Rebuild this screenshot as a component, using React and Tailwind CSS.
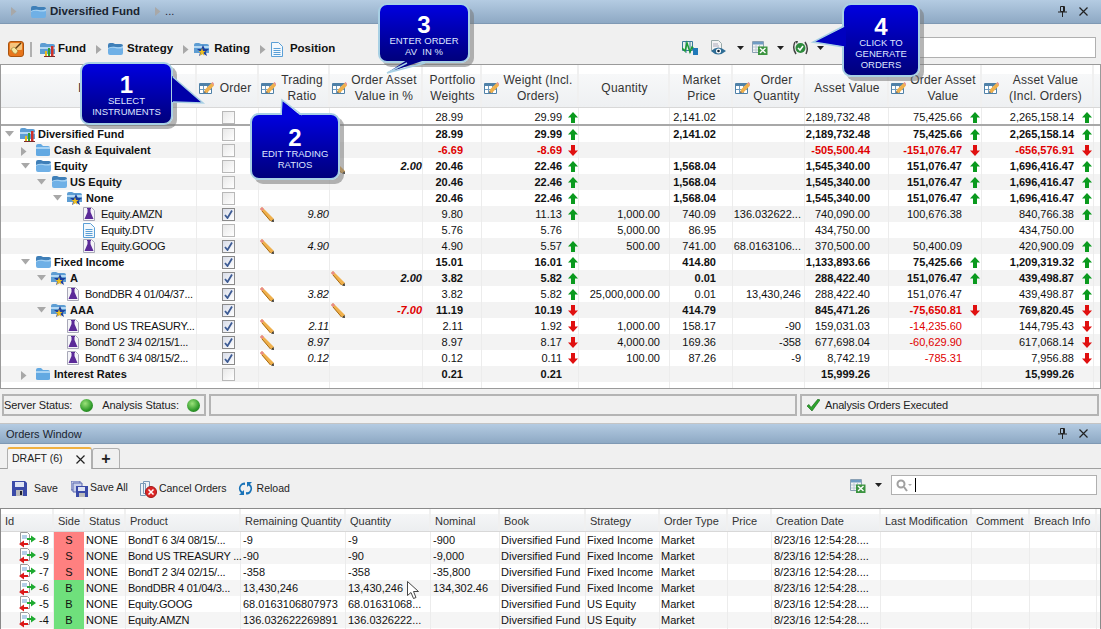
import React from 'react';

const FONT = "font-['Liberation_Sans',Arial,sans-serif]";
const mainCols = 'grid grid-cols-[196px_62px_71px_93px_59px_97px_91px_63px_72px_84px_93px_112px_1fr]';
const orderCols = 'grid grid-cols-[53px_31px_41px_115px_105px_85px_69px_86px_74px_68px_44px_109px_91px_58px_67px_1fr]';

function Tri({ dir = 'right', color = '#a8a8a8' }) {
  if (dir === 'down') return <svg width="9" height="6" viewBox="0 0 9 6" className="shrink-0"><path d="M0 0h9L4.5 5.5z" fill={color} /></svg>;
  return <svg width="6" height="9" viewBox="0 0 6 9" className="shrink-0"><path d="M0 0v9l5.5-4.5z" fill={color} /></svg>;
}

function Drop() {
  return <svg width="7" height="4" viewBox="0 0 7 4" className="shrink-0"><path d="M0 0h7L3.5 4z" fill="#222" /></svg>;
}

function FolderOpen({ w = 17 }) {
  return (
    <svg width={w} height="14" viewBox="0 0 17 14" className="shrink-0">
      <path d="M1 3q0-2 2-2h3l2 1h6q2 0 2 2v2H1z" fill="#3f7fb8" />
      <path d="M1 6q4-2 8-1t7-1v7q0 2-2 2H3q-2 0-2-2z" fill="#6fb0e6" />
      <path d="M1 6q4-2 8-1t7-1v2q-4 1-8 0t-7 1z" fill="#a9d3f3" />
    </svg>
  );
}

function FolderClosed() {
  return (
    <svg width="16" height="14" viewBox="0 0 16 14" className="shrink-0 mr-[1px]">
      <path d="M1 3q0-2 2-2h3l2 2h5q2 0 2 2v7q0 1-2 1H3q-2 0-2-1z" fill="#63a9e2" />
      <path d="M1 4h14v2H1z" fill="#a9d3f3" />
    </svg>
  );
}

function FundIcon() {
  return (
    <svg width="17" height="15" viewBox="0 0 17 15" className="shrink-0">
      <path d="M1 3q0-2 2-2h3l2 1h6q2 0 2 2v8H1z" fill="#5d9dd3" />
      <path d="M1 5h15v2H1z" fill="#b5d8f3" />
      <path d="M6 9h2v5H6z" fill="#e8b820" />
      <path d="M9 6h2v8H9z" fill="#2f9e35" />
      <path d="M12 4h2.500v10H12z" fill="#d03028" />
      <path d="M5 14h11v1H5z" fill="#7a2a2a" />
    </svg>
  );
}

function RatingIcon() {
  return (
    <svg width="16" height="15" viewBox="0 0 16 15" className="shrink-0 mr-[1px]">
      <path d="M0 3q0-2 2-2h3l2 1h6q2 0 2 2v7H0z" fill="#5d9dd3" />
      <path d="M0 4h15v2H0z" fill="#b5d8f3" />
      <path d="M9 3l1.800 4H15l-3.300 2.800L13 14l-4-2.500L5 14l1.300-4.200L3 7h4.200z" fill="#1d3f9c" />
      <path d="M8 6l1 3h2.500l-2 1.700.8 3L8 12l-2.200 1.700.8-3-2-1.700H7z" fill="#f0c020" />
    </svg>
  );
}

function DocIcon() {
  return (
    <svg width="12" height="15" viewBox="0 0 12 15" className="shrink-0">
      <path d="M.5.500h7l4 4v10H.5z" fill="#f2f8fd" stroke="#5a9fd6" />
      <path d="M2.500 6.500h7M2.500 8.500h7M2.500 10.500h7M2.500 12.500h7" stroke="#5a9fd6" />
    </svg>
  );
}

function FlaskIcon() {
  return (
    <svg width="12" height="14" viewBox="0 0 12 14" className="shrink-0">
      <path d="M.5.500h8l3 3v10H.5z" fill="#f4f4f8" stroke="#a8a8b8" />
      <path d="M4.500 2h3v3l3 7H1.500l3-7z" fill="#5b2a98" />
      <path d="M4 1.500h4" stroke="#5b2a98" />
    </svg>
  );
}

function Pencil() {
  return (
    <svg width="14" height="15" viewBox="0 0 14 15" className="shrink-0">
      <path d="M0 2l2-2 12 12-1 2.500L10.500 14z" fill="#efb04c" />
      <path d="M0 2l2-2 2 2-2 2z" fill="#e88a8a" />
      <path d="M2 4l8.500 10" stroke="#a86a10" />
      <path d="M11 14.500l3 .5-.5-3z" fill="#333" />
    </svg>
  );
}

function ColEdit() {
  return (
    <svg width="15" height="13" viewBox="0 0 15 13" className="shrink-0">
      <path d="M.5 1.500h12v10H.5z" fill="#fff" stroke="#4f81a8" />
      <path d="M1 2h11v2H1z" fill="#4f81a8" />
      <path d="M4.500 4v7M8.500 4v7M1 7.500h11" stroke="#6e9cc0" />
      <path d="M5 10.500l1-3L12.500 1 15 3.500 8 11z" fill="#efb04c" />
      <path d="M12.500 1l1-1L16 2.500l-1 1z" fill="#e88a8a" />
      <path d="M5 11l.6-2 1.400 1.500z" fill="#555" />
    </svg>
  );
}

function Arrow({ up }) {
  const d = up ? 'M5 0l5 5.500H7V11H3V5.500H0z' : 'M5 11L0 5.500h3V0h4v5.500h3z';
  return <svg width="10" height="11" viewBox="0 0 10 11"><path d={d} fill={up ? '#0a9a1e' : '#e01010'} /></svg>;
}

function Check({ on }) {
  return (
    <div className={`ml-[1px] w-[13px] h-[13px] border flex items-center justify-center ${on ? 'border-[#8a8a8a] bg-gradient-to-br from-[#d8dce8] to-white' : 'border-[#b8b8b8] bg-gradient-to-br from-[#e8e8e8] to-white'}`}>
      {on && <svg width="9" height="9" viewBox="0 0 9 9"><path d="M1 5l2.500 3L8 0.500" fill="none" stroke="#3d5b94" strokeWidth="1.800" /></svg>}
    </div>
  );
}

function OrderIcon() {
  return (
    <svg width="17" height="16" viewBox="0 0 17 16">
      <path d="M1.500.500h7l2 2v10h-9z" fill="#fff" stroke="#9a9a9a" />
      <path d="M3 4h5M3 6h5" stroke="#6aa0d0" />
      <path d="M8 6h4V3.500L17 7l-5 3.500V8H8z" fill="#1eaa30" />
      <path d="M9 11H5V8.500L0 12l5 3.500V13h4z" fill="#dd1818" />
    </svg>
  );
}

function ExcelIcon() {
  return (
    <svg width="16" height="15" viewBox="0 0 16 15" className="shrink-0">
      <path d="M.5 1.500h11v11H.5z" fill="#f4f4f4" stroke="#8aa0b4" />
      <path d="M1 2h10v2.500H1z" fill="#6f9cc4" />
      <path d="M4 4v8M7.500 4v8M1 7h10M1 10h10" stroke="#b8c8d4" />
      <path d="M6 6.500h9.500V15H6z" fill="#3c9440" />
      <path d="M8 8l5.500 5M13.500 8L8 13" stroke="#fff" strokeWidth="1.400" />
    </svg>
  );
}

function MiniChart() {
  return (
    <svg width="16" height="15" viewBox="0 0 16 15" className="shrink-0">
      <path d="M.5 1.500h10v9h-10z" fill="#e8f2e8" stroke="#3a7a9c" />
      <path d="M4 1v12M8 1v12" stroke="#3a7a9c" />
      <path d="M0 8l3 3 2-8 3 9 2-5 3 3" fill="none" stroke="#1b9a34" strokeWidth="1.500" />
      <path d="M11 8h5v7h-5z" fill="#2079b8" />
    </svg>
  );
}

function EyeDoc() {
  return (
    <svg width="16" height="15" viewBox="0 0 16 15" className="shrink-0">
      <path d="M1.500.500h7l3 3v7h-10z" fill="#f4f4f4" stroke="#9aa" />
      <path d="M3 4h5M3 6h6" stroke="#aab" />
      <path d="M1 11q7-7 15 0-8 7-15 0z" fill="#2f6d95" />
      <circle cx="8.500" cy="11" r="2.500" fill="#fff" />
      <circle cx="8.500" cy="11" r="1.300" fill="#123" />
    </svg>
  );
}

function GenIcon() {
  return (
    <svg width="17" height="16" viewBox="0 0 17 16" className="shrink-0">
      <path d="M3 2Q0 8 4 14" fill="none" stroke="#444" strokeWidth="1.500" />
      <path d="M14 14q3-6-1-12" fill="none" stroke="#444" strokeWidth="1.500" />
      <path d="M3 1l3 0-1 3z" fill="#444" />
      <circle cx="8.500" cy="8" r="5" fill="#2d8a3c" />
      <path d="M6 8l2 2 3-4" fill="none" stroke="#fff" strokeWidth="1.500" />
    </svg>
  );
}

function Broom() {
  return (
    <svg width="16" height="16" viewBox="0 0 16 16" className="shrink-0">
      <rect x=".5" y=".5" width="15" height="15" rx="2.500" fill="#e8761c" stroke="#a85410" />
      <rect x="2" y="2" width="12" height="7" rx="1" fill="#f6c47c" />
      <path d="M13 2L7 8" stroke="#5a3a10" strokeWidth="1.500" />
      <path d="M3 8l3-2 4 4-2 3q-3 0-5-5z" fill="#f4e6a0" stroke="#8a6a20" strokeWidth=".5" />
    </svg>
  );
}

function Pin() {
  return (
    <svg width="9" height="11" viewBox="0 0 9 11" className="shrink-0">
      <path d="M2.500.500h4v5h-4zM0 6h9M4.500 6v5" fill="none" stroke="#222" />
      <path d="M5 1h1.500v4.500H5z" fill="#222" />
    </svg>
  );
}

function CloseX({ size = 9 }) {
  return <svg width={size} height={size} viewBox="0 0 9 9" className="shrink-0"><path d="M.5.500l8 8M8.500.500l-8 8" stroke="#222" strokeWidth="1.200" /></svg>;
}

function Callout({ pos, num, lines, tail, edge, fill, pad }) {
  return (
    <div className={`absolute ${pos} ${pad} rounded-[9px] border-2 border-[#a8d0e4] bg-gradient-to-b from-[#0000e0] to-[#00007c] shadow-[4px_4px_0_rgba(120,120,120,0.55)] flex flex-col items-center`}>
      <svg className="absolute left-0 top-0 w-full h-full overflow-visible">
        <polygon points={tail} fill={fill} />
        <polyline points={edge} fill="none" stroke="#a8d0e4" strokeWidth="1.500" />
      </svg>
      <span className="relative font-bold text-white text-[24px] leading-[26px] mb-[-3px]">{num}</span>
      {lines.map(l => <span key={l} className="relative text-[9.500px] leading-[11px] text-[#dfe6ff] whitespace-pre">{l}</span>)}
    </div>
  );
}

const rows = [
  { level: 0, icon: 'fund', label: 'Diversified Fund', tri: 'down', bold: 1, pw: '28.99', wt: '29.99', wd: 'up', mp: '2,141.02', av: '2,189,732.48', oa: '75,425.66', od: 'up', inc: '2,265,158.14', id: 'up' },
  { level: 1, icon: 'closed', label: 'Cash & Equivalent', tri: 'right', bold: 1, red: 1, pw: '-6.69', wt: '-8.69', wd: 'down', av: '-505,500.44', oa: '-151,076.47', od: 'down', inc: '-656,576.91', id: 'down', incRed: 1 },
  { level: 1, icon: 'open', label: 'Equity', tri: 'down', bold: 1, oavPen: 1, oav: '2.00', pw: '20.46', wt: '22.46', wd: 'up', mp: '1,568.04', av: '1,545,340.00', oa: '151,076.47', od: 'up', inc: '1,696,416.47', id: 'up' },
  { level: 2, icon: 'open', label: 'US Equity', tri: 'down', bold: 1, pw: '20.46', wt: '22.46', wd: 'up', mp: '1,568.04', av: '1,545,340.00', oa: '151,076.47', od: 'up', inc: '1,696,416.47', id: 'up' },
  { level: 3, icon: 'star', label: 'None', tri: 'down', bold: 1, pw: '20.46', wt: '22.46', wd: 'up', mp: '1,568.04', av: '1,545,340.00', oa: '151,076.47', od: 'up', inc: '1,696,416.47', id: 'up' },
  { level: 4, icon: 'flask', label: 'Equity.AMZN', on: 1, ratio: '9.80', pw: '9.80', wt: '11.13', wd: 'up', qty: '1,000.00', mp: '740.09', oq: '136.032622...', av: '740,090.00', oa: '100,676.38', inc: '840,766.38', id: 'up' },
  { level: 4, icon: 'doc', label: 'Equity.DTV', pw: '5.76', wt: '5.76', qty: '5,000.00', mp: '86.95', av: '434,750.00', inc: '434,750.00' },
  { level: 4, icon: 'flask', label: 'Equity.GOOG', on: 1, ratio: '4.90', pw: '4.90', wt: '5.57', wd: 'up', qty: '500.00', mp: '741.00', oq: '68.0163106...', av: '370,500.00', oa: '50,400.09', inc: '420,900.09', id: 'up' },
  { level: 1, icon: 'open', label: 'Fixed Income', tri: 'down', bold: 1, on: 1, pw: '15.01', wt: '16.01', wd: 'up', mp: '414.80', av: '1,133,893.66', oa: '75,425.66', od: 'up', inc: '1,209,319.32', id: 'up' },
  { level: 2, icon: 'star', label: 'A', tri: 'down', bold: 1, on: 1, oavPen: 1, oav: '2.00', pw: '3.82', wt: '5.82', wd: 'up', mp: '0.01', av: '288,422.40', oa: '151,076.47', od: 'up', inc: '439,498.87', id: 'up' },
  { level: 3, icon: 'flask', label: 'BondDBR 4 01/04/37...', on: 1, ratio: '3.82', pw: '3.82', wt: '5.82', wd: 'up', qty: '25,000,000.00', mp: '0.01', oq: '13,430,246', av: '288,422.40', oa: '151,076.47', inc: '439,498.87', id: 'up' },
  { level: 2, icon: 'star', label: 'AAA', tri: 'down', bold: 1, on: 1, oavPen: 1, oav: '-7.00', oavRed: 1, pw: '11.19', wt: '10.19', wd: 'down', mp: '414.79', av: '845,471.26', oa: '-75,650.81', oaRed: 1, od: 'down', inc: '769,820.45', id: 'down' },
  { level: 3, icon: 'flask', label: 'Bond US TREASURY...', on: 1, ratio: '2.11', pw: '2.11', wt: '1.92', wd: 'down', qty: '1,000.00', mp: '158.17', oq: '-90', av: '159,031.03', oa: '-14,235.60', oaRed: 1, inc: '144,795.43', id: 'down' },
  { level: 3, icon: 'flask', label: 'BondT 2 3/4 02/15/1...', on: 1, ratio: '8.97', pw: '8.97', wt: '8.17', wd: 'down', qty: '4,000.00', mp: '169.36', oq: '-358', av: '677,698.04', oa: '-60,629.90', oaRed: 1, inc: '617,068.14', id: 'down' },
  { level: 3, icon: 'flask', label: 'BondT 6 3/4 08/15/2...', on: 1, ratio: '0.12', pw: '0.12', wt: '0.11', wd: 'down', qty: '100.00', mp: '87.26', oq: '-9', av: '8,742.19', oa: '-785.31', oaRed: 1, inc: '7,956.88', id: 'down' },
  { level: 1, icon: 'closed', label: 'Interest Rates', tri: 'right', bold: 1, pw: '0.21', wt: '0.21', av: '15,999.26', inc: '15,999.26' },
];

const orders = [
  ['-8', 'S', 'BondT 6 3/4 08/15/...', '-9', '-9', '-900', 'Fixed Income'],
  ['-9', 'S', 'Bond US TREASURY ...', '-90', '-90', '-9,000', 'Fixed Income'],
  ['-7', 'S', 'BondT 2 3/4 02/15/...', '-358', '-358', '-35,800', 'Fixed Income'],
  ['-6', 'B', 'BondDBR 4 01/04/3...', '13,430,246', '13,430,246', '134,302.46', 'Fixed Income'],
  ['-5', 'B', 'Equity.GOOG', '68.0163106807973', '68.01631068...', '', 'US Equity'],
  ['-4', 'B', 'Equity.AMZN', '136.032622269891', '136.0326222...', '', 'US Equity'],
];

const headers = [
  ['Order', 1], ['Trading\nRatio', 1], ['Order Asset\nValue in %', 1], ['Portfolio\nWeights', 0], ['Weight (Incl.\nOrders)', 1],
  ['Quantity', 0], ['Market\nPrice', 0], ['Order\nQuantity', 1], ['Asset Value', 0], ['Order Asset\nValue', 1], ['Asset Value\n(Incl. Orders)', 1],
];

const orderHeaders = ['Id', 'Side', 'Status', 'Product', 'Remaining Quantity', 'Quantity', 'Nominal', 'Book', 'Strategy', 'Order Type', 'Price', 'Creation Date', 'Last Modification', 'Comment', 'Breach Info'];

function NodeIcon({ kind }) {
  if (kind === 'fund') return <FundIcon />;
  if (kind === 'closed') return <FolderClosed />;
  if (kind === 'open') return <FolderOpen />;
  if (kind === 'star') return <RatingIcon />;
  if (kind === 'doc') return <DocIcon />;
  return <FlaskIcon />;
}

function Num({ val, pad, red }) {
  return <div className={`flex justify-end items-center border-r border-[#ececec] ${pad} ${red ? 'text-[#e00000]' : ''}`}>{val}</div>;
}

function NumArrow({ val, dir, red, box = 'w-[19px] pr-[1px]' }) {
  return (
    <div className={`flex justify-end items-center border-r border-[#ececec] ${red ? 'text-[#e00000]' : ''}`}>
      {val}
      <span className={`${box} flex justify-end`}>{dir && <Arrow up={dir === 'up'} />}</span>
    </div>
  );
}

function NumberCells({ r }) {
  return (
    <>
      <Num val={r.pw} pad="pr-[18px]" red={r.red} />
      <NumArrow val={r.wt} dir={r.wd} red={r.red} box="w-[16px] pr-[0px]" />
      <Num val={r.qty} pad="pr-[9px]" />
      <Num val={r.mp} pad="pr-[16px]" />
      <Num val={r.oq} pad="pr-[3px]" />
      <Num val={r.av} pad="pr-[18px]" red={r.red} />
      <NumArrow val={r.oa} dir={r.od} red={r.red || r.oaRed} />
      <NumArrow val={r.inc} dir={r.id} red={r.incRed} />
    </>
  );
}

function TreeRow({ r, i }) {
  const leaf = r.icon === 'flask' || r.icon === 'doc';
  return (
    <div className={`${mainCols} h-4 text-[#111] ${i % 2 ? 'bg-[#f3f3f3]' : 'bg-white'} ${r.bold ? 'font-bold' : ''}`}>
      <div className="relative flex items-center gap-[2px] border-r border-[#ececec] whitespace-nowrap overflow-hidden" style={{ paddingLeft: 18 + 16 * r.level }}>
        {r.tri && <span className="absolute top-[5px]" style={{ left: 4 + 16 * r.level }}><Tri dir={r.tri} /></span>}
        <NodeIcon kind={r.icon} />
        <span className={leaf ? 'ml-[4px] tracking-[-0.25px]' : ''}>{r.label}</span>
      </div>
      <div className="flex items-center justify-center border-r border-[#ececec]"><Check on={r.on} /></div>
      <div className="flex items-center justify-between pl-[1px] border-r border-[#ececec] italic font-normal">
        {r.ratio ? <Pencil /> : <span />}<span>{r.ratio}</span>
      </div>
      <div className={`flex items-center justify-between pl-[1px] border-r border-[#ececec] italic ${r.oavRed ? 'text-[#e00000]' : ''}`}>
        {r.oavPen ? <Pencil /> : <span />}<span>{r.oav}</span>
      </div>
      <NumberCells r={r} />
    </div>
  );
}

function MainTable() {
  const summary = { pw: '28.99', wt: '29.99', wd: 'up', mp: '2,141.02', av: '2,189,732.48', oa: '75,425.66', od: 'up', inc: '2,265,158.14', id: 'up' };
  return (
    <div className="h-[325px] border border-[#9a9a9a] bg-white flex flex-col overflow-hidden">
      <div className={`${mainCols} h-[43px] shrink-0 bg-[linear-gradient(#fff_21%,#f7f8f9_21%,#eef0f2)] border-b border-[#d8d8d8] text-[12px] leading-4 text-[#333] tracking-[0.2px]`}>
        <div className="border-r-2 border-[#f0f0f0] flex items-center pl-[77px] pt-[4px]">Instrument</div>
        {headers.map(([label, edit]) => (
          <div key={label} className="flex items-center pl-[2px] pt-[4px] border-r-2 border-[#f0f0f0]">
            {edit ? <ColEdit /> : null}
            <span className="flex-1 text-center whitespace-pre">{label}</span>
          </div>
        ))}
      </div>
      <div className={`${mainCols} h-4 shrink-0 text-[#111] leading-none [&>div]:pt-[3px]`}>
        <div className="border-r border-[#ececec]" />
        <div className="flex items-center justify-center border-r border-[#ececec]"><Check /></div>
        <div className="border-r border-[#ececec]" />
        <div className="border-r border-[#ececec]" />
        <NumberCells r={summary} />
      </div>
      <div className="h-[2px] shrink-0 bg-[#a8a8a8]" />
      {rows.map((r, i) => <TreeRow key={r.label} r={r} i={i} />)}
      <div className={`${mainCols} flex-1`}>
        {[0, 1, 2, 3, 4, 5, 6, 7, 8, 9, 10, 11].map(n => <div key={n} className="border-r border-[#ececec]" />)}
      </div>
    </div>
  );
}

function TitleBar({ children, h }) {
  return <div className={`${h} shrink-0 bg-gradient-to-b from-[#b4cbe2] to-[#8ea9c4] border-b border-[#7f99b4] flex items-center`}>{children}</div>;
}

function OrdersTable() {
  return (
    <div className="flex-1 border border-[#8a8a8a] border-b-0 bg-white overflow-hidden">
      <div className={`${orderCols} h-[23px] bg-[linear-gradient(#fff_22%,#f5f6f7_22%,#eceef0)] border-b border-[#d8d8d8] text-[#333]`}>
        {orderHeaders.map(h => <div key={h} className="flex items-center pl-[4px] pt-[2px] border-r-2 border-[#f0f0f0] whitespace-nowrap overflow-hidden">{h}</div>)}
        <div />
      </div>
      {orders.map((o, i) => (
        <div key={o[0]} className={`${orderCols} h-4 text-[#111] whitespace-nowrap ${i % 2 ? 'bg-[#f5f5f5]' : 'bg-white'}`}>
          <div className="flex items-center pl-[18px] gap-[3px] border-r border-[#ececec]"><OrderIcon />{o[0]}</div>
          <div className={`flex items-center justify-center mr-[1px] ${o[1] === 'S' ? 'bg-[#ff8080]' : 'bg-[#6fe07c]'}`}>{o[1]}</div>
          <div className="flex items-center pl-[1px] border-r border-[#ececec]">NONE</div>
          <div className="flex items-center pl-[2px] border-r border-[#ececec] tracking-[-0.25px]">{o[2]}</div>
          <div className="flex items-center pl-[2px] border-r border-[#ececec]">{o[3]}</div>
          <div className="flex items-center pl-[2px] border-r border-[#ececec]">{o[4]}</div>
          <div className="flex items-center pl-[2px] border-r border-[#ececec]">{o[5]}</div>
          <div className="flex items-center pl-[1px] border-r border-[#ececec]">Diversified Fund</div>
          <div className="flex items-center pl-[1px] border-r border-[#ececec]">{o[6]}</div>
          <div className="flex items-center pl-[1px] border-r border-[#ececec]">Market</div>
          <div className="border-r border-[#ececec]" />
          <div className="flex items-center pl-[2px] border-r border-[#ececec]">8/23/16 12:54:28....</div>
          <div className="border-r border-[#ececec]" />
          <div className="border-r border-[#ececec]" />
          <div className="border-r border-[#ececec]" />
          <div />
        </div>
      ))}
    </div>
  );
}

export default function App() {
  return (
    <div className={`${FONT} relative w-[1101px] h-[629px] overflow-hidden bg-[#f0f0f0] text-[11px] flex flex-col`}>
      <TitleBar h="h-6">
        <span className="ml-[11px]"><Tri /></span>
        <span className="ml-[13px]"><FolderOpen /></span>
        <span className="ml-[3px] font-bold text-[11.500px] text-[#1a2430]">Diversified Fund</span>
        <span className="ml-[15px]"><Tri /></span>
        <span className="ml-[4px] text-[#223]">...</span>
        <span className="ml-auto mr-[13px] flex items-center gap-[12px]"><Pin /><CloseX /></span>
      </TitleBar>

      <div className="h-10 shrink-0 flex items-center pl-[8px] pt-[10px] font-bold text-[#111] text-[11.500px]">
        <Broom />
        <span className="ml-[6px] mr-[7px] w-[2px] h-[15px] bg-[#b0b0b0]" />
        <FundIcon />
        <span className="ml-[2px]">Fund</span>
        <span className="ml-[10px] mr-[5px]"><Tri /></span>
        <FolderOpen />
        <span className="ml-[3px]">Strategy</span>
        <span className="ml-[10px] mr-[5px]"><Tri /></span>
        <RatingIcon />
        <span className="ml-[3px]">Rating</span>
        <span className="ml-[10px] mr-[5px]"><Tri /></span>
        <DocIcon />
        <span className="ml-[7px]">Position</span>
        <div className="ml-auto flex items-center mr-[5px] mb-[3px]">
          <MiniChart />
          <span className="ml-[12px]"><EyeDoc /></span>
          <span className="ml-[11px]"><Drop /></span>
          <span className="ml-[8px]"><ExcelIcon /></span>
          <span className="ml-[9px]"><Drop /></span>
          <span className="ml-[8px]"><GenIcon /></span>
          <span className="ml-[8px]"><Drop /></span>
          <div className="ml-[21px] w-[251px] h-[21px] border border-[#b0b0b0] bg-white" />
        </div>
      </div>

      <MainTable />

      <div className="mt-[5px] h-[22px] shrink-0 flex gap-[3px] px-[2px] text-[#222]">
        <div className="w-[204px] border-2 border-[#b4b4b4] flex items-center pt-[1px] tracking-[-0.1px]">
          <span>Server Status:</span>
          <span className="ml-[8px] w-[13px] h-[13px] rounded-full bg-[radial-gradient(circle_at_40%_35%,#9be27a,#2f9a2a_60%,#145c14)]" />
          <span className="ml-[9px]">Analysis Status:</span>
          <span className="ml-[8px] w-[13px] h-[13px] rounded-full bg-[radial-gradient(circle_at_40%_35%,#9be27a,#2f9a2a_60%,#145c14)]" />
        </div>
        <div className="w-[588px] border-2 border-[#b4b4b4]" />
        <div className="flex-1 border-2 border-[#b4b4b4] flex items-center pl-[5px] pt-[1px] gap-[5px] tracking-[-0.15px]">
          <svg width="13" height="13" viewBox="0 0 13 13"><path d="M0 7l2-1.500 2 3L11 0l2 1-8 11z" fill="#2ca52c" stroke="#136013" strokeWidth=".6" /></svg>
          Analysis Orders Executed
        </div>
      </div>

      <div className="mt-[7px] flex-1 min-h-0 flex flex-col border-t border-[#c4c4c4]">
        <TitleBar h="h-[20px]">
          <span className="ml-[6px] pt-[1px] text-[#1a2430]">Orders Window</span>
          <span className="ml-auto mr-[13px] flex items-center gap-[12px]"><Pin /><CloseX /></span>
        </TitleBar>
        <div className="h-[25px] shrink-0 flex items-end pl-[7px] border-b border-[#a0a0a0] pt-[3px] text-[#222]">
          <div className="w-[85px] h-[22px] -mb-px bg-[#f5f5f5] border-x border-[#b0b0b0] border-t-2 border-t-[#f0b040] rounded-t-[3px] flex items-center pl-[4px] text-[10.500px] whitespace-nowrap">
            DRAFT (6)
            <span className="ml-[13px]"><CloseX /></span>
          </div>
          <div className="w-[28px] h-[20px] bg-[#f0f0f0] border border-b-0 border-[#b0b0b0] rounded-t-[3px] flex items-center justify-center font-bold text-[16px] leading-none">+</div>
        </div>
        <div className="h-[39px] shrink-0 flex items-center pl-[12px] pr-[4px] text-[#222] text-[10.500px]">
          <svg width="15" height="15" viewBox="0 0 15 15"><path d="M0 0h13l2 2v13H0z" fill="#3a4aa8" /><path d="M3 1h9v5H3z" fill="#dfe4f4" /><path d="M4 9h7v6H4z" fill="#bbb" /><path d="M8 10h2v4H8z" fill="#223" /></svg>
          <span className="ml-[7px]">Save</span>
          <svg className="ml-[13px]" width="17" height="16" viewBox="0 0 17 16"><path d="M0 0h9v9H0z" fill="#c8d0ea" stroke="#5a68b0" /><path d="M2 2h9v9H2z" fill="#c8d0ea" stroke="#5a68b0" /><path d="M5 5h12v11H5z" fill="#3a4aa8" /><path d="M7 6h7v4H7z" fill="#dfe4f4" /><path d="M8 12h6v4H8z" fill="#bbb" /></svg>
          <span className="ml-[2px] -mt-[2px]">Save All</span>
          <svg className="ml-[11px]" width="18" height="18" viewBox="0 0 18 18"><path d="M1.500 3.500h5v12h-5zM4.500 1.500h6v12h-6z" fill="#eef3f8" stroke="#7a9ab8" /><circle cx="12" cy="12" r="5.500" fill="#dc2626" stroke="#a01818" /><path d="M9.500 9.500l5 5M14.500 9.500l-5 5" stroke="#fff" strokeWidth="1.500" /></svg>
          <span className="ml-[2px]">Cancel Orders</span>
          <svg className="ml-[11px]" width="15" height="15" viewBox="0 0 15 15"><path d="M7 1.500a6 6 0 0 0-4 10.500L1 14h5V9l-1.500 1.500A3.500 3.500 0 0 1 7 4z" fill="#1a73b8" /><path d="M8 13.500a6 6 0 0 0 4-10.500L14 1H9v5l1.500-1.500A3.500 3.500 0 0 1 8 11z" fill="#1a73b8" /></svg>
          <span className="ml-[4px]">Reload</span>
          <div className="ml-auto flex items-center mb-[7px]">
            <ExcelIcon />
            <span className="ml-[9px]"><Drop /></span>
            <div className="ml-[9px] w-[206px] h-[20px] border border-[#b0b0b0] bg-white flex items-center pl-[4px]">
              <svg width="17" height="13" viewBox="0 0 17 13"><circle cx="5" cy="5" r="3.500" fill="none" stroke="#a0a0a0" strokeWidth="2" /><path d="M8 8l3 4" stroke="#a0a0a0" strokeWidth="2" /><path d="M12 5h4l-2 2z" fill="#b0b0b0" /></svg>
              <span className="ml-[2px] w-px h-[14px] bg-black" />
            </div>
          </div>
        </div>
        <OrdersTable />
      </div>

      <Callout pos="left-[80px] top-[62px] w-[93px] h-[63px]" pad="pt-[8px]" num="1" lines={['SELECT', 'INSTRUMENTS']}
        tail="90,12 121,39 90,38" edge="91,13 121,39 91,38" fill="#0000a8" />
      <Callout pos="left-[250px] top-[113px] w-[90px] h-[67px]" pad="pt-[10px]" num="2" lines={['EDIT TRADING', 'RATIOS']}
        tail="30,2 30,-15 50,2" edge="29,0 30,-15 50,0" fill="#0000dc" />
      <Callout pos="left-[378px] top-[3px] w-[92px] h-[60px]" pad="pt-[7px]" num="3" lines={['ENTER ORDER', 'AV  IN %']}
        tail="27,55 7,68 45,55" edge="27,58 7,68 45,58" fill="#00008a" />
      <Callout pos="left-[842px] top-[3px] w-[78px] h-[74px]" pad="pt-[9px]" num="4" lines={['CLICK TO', 'GENERATE', 'ORDERS']}
        tail="2,21 -31,37 2,42" edge="0,21 -31,37 0,42" fill="#0000c0" />

      <svg className="absolute left-[407px] top-[581px]" width="13" height="18" viewBox="0 0 13 18">
        <path d="M.5.500v14l3.500-3 2.500 6 2.500-1-2.500-6h5z" fill="#fff" stroke="#444" />
      </svg>
    </div>
  );
}
